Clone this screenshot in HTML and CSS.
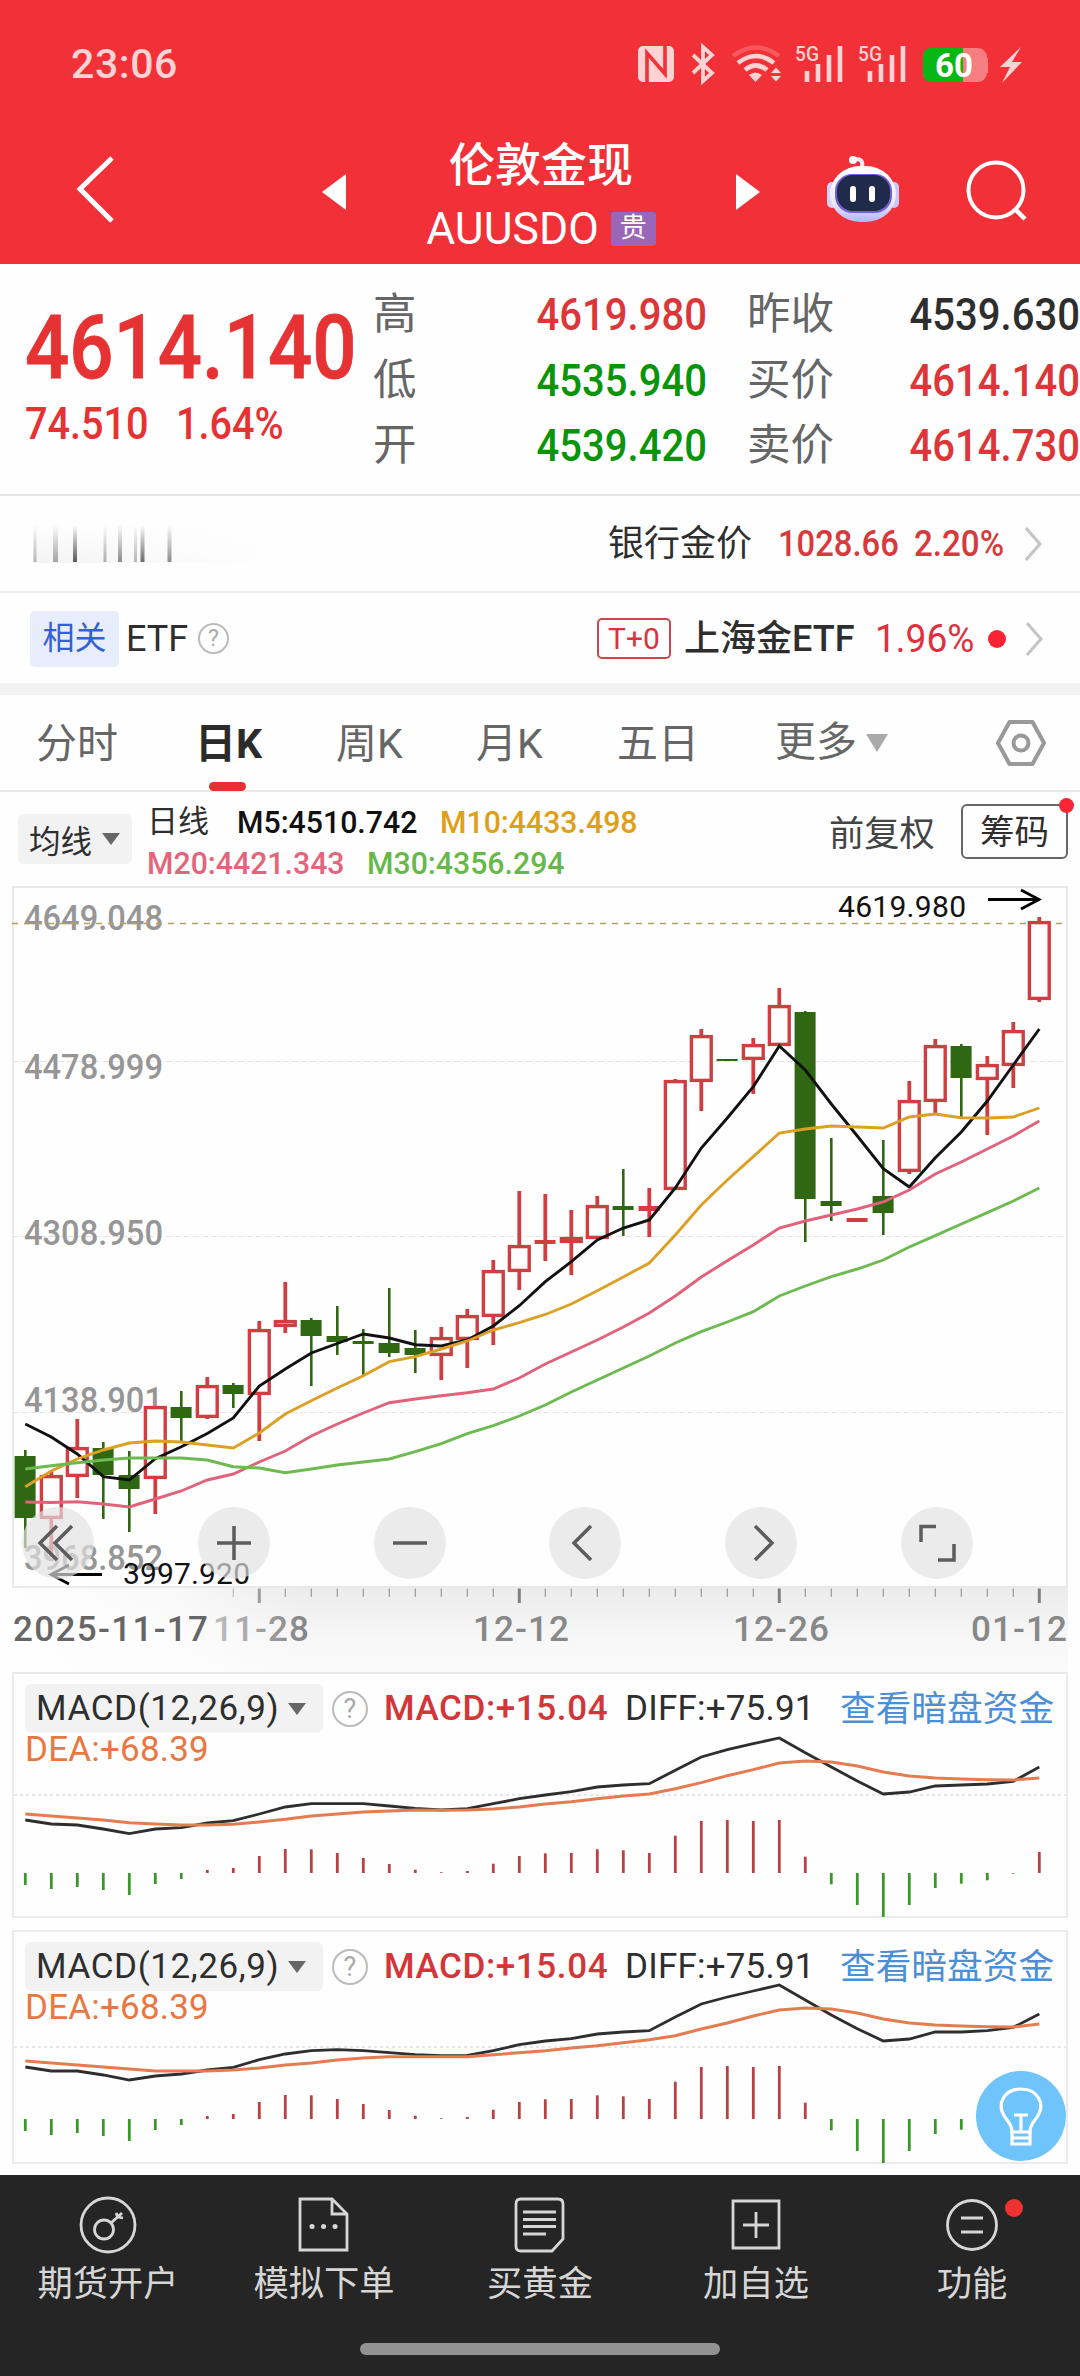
FILE: index.html
```html
<!DOCTYPE html>
<html lang="zh-CN">
<head>
<meta charset="utf-8">
<title>伦敦金现 AUUSDO</title>
<link rel="stylesheet" href="styles.css">
</head>
<body>
<div class="app">
  <header class="header">
    <div class="status">
      <span class="clock">23:06</span>
      <svg class="status-icons" width="396" height="46" viewBox="634 42 396 46">
        <g fill="#ffd3d4">
          <rect x="638" y="46" width="36" height="36" rx="5"/>
          <path d="M647 82V53L665 74V46" fill="none" stroke="#f23037" stroke-width="3.600"/>
          <path d="M693 55L712 73L703 81V47L712 55L693 73" fill="none" stroke="#ffd3d4" stroke-width="3.800"/>
          <path d="M733 56Q756 39 779 56" fill="none" stroke="#f5585d" stroke-width="4.500"/>
          <path d="M738 63Q756 49 774 63M745 70Q756 61 767 70" fill="none" stroke="#ffd3d4" stroke-width="4.600"/>
          <path d="M749 75Q755.500 70 762 75L755.500 82Z"/>
          <path d="M771 73l5-5.500l5 5.500zM771 76h10l-5 5.500z"/>
          <path d="M807 71v11M818 64v18M829 55v27M840 46v36M870 71v11M881 64v18M892 55v27M903 46v36" fill="none" stroke="#ffd3d4" stroke-width="4.600"/>
          <text x="795" y="61" class="net" textLength="24" lengthAdjust="spacingAndGlyphs">5G</text>
          <text x="858" y="61" class="net" textLength="24" lengthAdjust="spacingAndGlyphs">5G</text>
          <path d="M983 58h5v15h-5z" fill="#f57f80"/>
          <rect x="923" y="48" width="64" height="34" rx="9" fill="#f57f80"/>
          <path d="M932 48H963V82H932Q923 82 923 73V57Q923 48 932 48Z" fill="#08b614"/>
          <text x="935" y="76.500" class="battery" textLength="38" lengthAdjust="spacingAndGlyphs">60</text>
          <path d="M1021 47L1000 67H1010L1002 83L1022 62H1012Z"/>
        </g>
      </svg>
    </div>
    <nav class="titlebar">
      <svg class="back" width="48" height="76" viewBox="0 0 48 76"><path d="M41 7L9 38L41 70" fill="none" stroke="#fff" stroke-width="5"/></svg>
      <svg class="prev" width="24" height="36" viewBox="0 0 24 36"><path d="M24 0V36L0 18Z" fill="#fff"/></svg>
      <div class="title">
        <h1>伦敦金现</h1>
        <div class="code">AUUSDO<span>贵</span></div>
      </div>
      <svg class="next" width="24" height="36" viewBox="0 0 24 36"><path d="M0 0V36L24 18Z" fill="#fff"/></svg>
      <svg class="robot" width="74" height="70" viewBox="0 0 74 70">
        <defs><linearGradient id="shell" x2="0" y2="1"><stop stop-color="#fff"/><stop offset=".65" stop-color="#efeaff"/><stop offset="1" stop-color="#b2b5f1"/></linearGradient></defs>
        <path d="M36 13Q38 4 28 5" fill="none" stroke="#eee8fa" stroke-width="4"/><circle cx="27" cy="6" r="4" fill="#fff"/>
        <rect x="1" y="28" width="10" height="26" rx="5" fill="#d5d3f8"/><rect x="63" y="28" width="10" height="26" rx="5" fill="#c9c8f5"/>
        <rect x="4" y="12" width="66" height="56" rx="30" fill="url(#shell)"/>
        <rect x="9" y="20" width="57" height="39" rx="17" fill="#7560d0"/><rect x="11" y="21" width="53" height="36" rx="16" fill="#202a4b"/>
        <path d="M27 35v10M46 35v10" stroke="#fff" stroke-width="6" stroke-linecap="round"/>
      </svg>
      <svg class="search" width="64" height="64" viewBox="0 0 64 64"><circle cx="31" cy="31" r="27.500" fill="none" stroke="#fff" stroke-width="4"/><path d="M49 49L60 60" stroke="#fff" stroke-width="4.500"/></svg>
    </nav>
  </header>

  <section class="quote">
    <div class="last">
      <div class="price"><span class="narrow">4614.140</span></div>
      <div class="change"><span class="narrow">74.510</span><span class="narrow">1.64%</span></div>
    </div>
    <dl class="stats">
      <dt>高</dt><dd class="up">4619.980</dd><dt>昨收</dt><dd>4539.630</dd>
      <dt>低</dt><dd class="down">4535.940</dd><dt>买价</dt><dd class="up">4614.140</dd>
      <dt>开</dt><dd class="down">4539.420</dd><dt>卖价</dt><dd class="up">4614.730</dd>
    </dl>
  </section>

  <section class="row bank">
    <svg class="fading" width="242" height="38" viewBox="0 0 242 38">
      <defs>
        <linearGradient id="veil" x2="0" y2="1"><stop stop-color="#fefefe"/><stop offset="1" stop-color="#fefefe" stop-opacity="0"/></linearGradient>
        <linearGradient id="mist"><stop stop-color="#f3f3f3"/><stop offset="1" stop-color="#fefefe"/></linearGradient>
      </defs>
      <rect width="230" height="38" fill="url(#mist)"/>
      <path d="M2 0V37M102.500 0V37" stroke="#b4b4b4" stroke-width="3"/>
      <path d="M22.500 0V37" stroke="#a2a2a2" stroke-width="5"/>
      <path d="M42 0V37" stroke="#555" stroke-width="4"/>
      <path d="M72 0V37" stroke="#aaa" stroke-width="3"/>
      <path d="M87 0V37M136.500 0V37" stroke="#8a8a8a" stroke-width="4"/>
      <path d="M109.500 0V37" stroke="#666" stroke-width="4"/>
      <rect width="242" height="38" fill="url(#veil)"/>
    </svg>
    <span class="bank-name">银行金价</span>
    <span class="bank-price">1028.66</span>
    <span class="bank-pct">2.20%</span>
    <svg class="chev" width="18" height="34" viewBox="0 0 18 34"><path d="M1 1L15 17L1 33" fill="none" stroke="#c4c4c4" stroke-width="3"/></svg>
  </section>
  <section class="row etf">
    <span class="tag">相关</span><span class="etf-label">ETF</span>
    <span class="help small">?</span>
    <span class="t0">T+0</span>
    <b class="etf-name">上海金ETF</b>
    <span class="etf-pct">1.96%</span><i class="live"></i>
    <svg class="chev" width="18" height="34" viewBox="0 0 18 34"><path d="M1 1L15 17L1 33" fill="none" stroke="#c4c4c4" stroke-width="3"/></svg>
  </section>

  <nav class="tabs">
    <span>分时</span><span class="active">日K</span><span>周K</span><span>月K</span><span>五日</span>
    <span class="more">更多<i></i></span>
    <svg width="52" height="50" viewBox="0 0 52 50"><path d="M14.500 4H37.500L49 25L37.500 46H14.500L3 25Z" fill="none" stroke="#999" stroke-width="4" stroke-linejoin="round"/><circle cx="26" cy="25" r="7.500" fill="none" stroke="#999" stroke-width="4"/></svg>
  </nav>

  <section class="averages">
    <span class="picker">均线<i></i></span>
    <div class="ma">
      <div><span class="cycle">日线</span><span class="m5">M5:4510.742</span><span class="m10">M10:4433.498</span></div>
      <div><span class="m20">M20:4421.343</span><span class="m30">M30:4356.294</span></div>
    </div>
    <span class="adjust">前复权</span>
    <span class="chips">筹码</span>
  </section>

  <section class="chart">
    <svg id="kline" width="1080" height="792" viewBox="0 880 1080 792"></svg>
    <div class="tools">
      <button><svg viewBox="0 0 72 72"><path d="M35 19L18 36L35 53M50 19L33 36L50 53"/></svg></button>
      <button><svg viewBox="0 0 72 72"><path d="M36 19V53M19 36H53"/></svg></button>
      <button><svg viewBox="0 0 72 72"><path d="M19 36H53"/></svg></button>
      <button><svg viewBox="0 0 72 72"><path d="M42 19L25 36L42 53"/></svg></button>
      <button><svg viewBox="0 0 72 72"><path d="M30 19L47 36L30 53"/></svg></button>
      <button><svg viewBox="0 0 72 72"><path d="M20 35V19.500H35M53 37V53H37"/></svg></button>
    </div>
  </section>

  <section class="macd first">
    <svg id="macd1" width="1056" height="246" viewBox="12 1672 1056 246"></svg>
    <div class="legend"><span class="indicator">MACD(12,26,9)<i></i></span><span class="help">?</span><span class="v-macd">MACD:+15.04</span><span class="v-diff">DIFF:+75.91</span><a>查看暗盘资金</a></div>
    <div class="dea">DEA:+68.39</div>
  </section>
  <section class="macd second">
    <svg id="macd2" width="1056" height="234" viewBox="12 1930 1056 234"></svg>
    <div class="legend"><span class="indicator">MACD(12,26,9)<i></i></span><span class="help">?</span><span class="v-macd">MACD:+15.04</span><span class="v-diff">DIFF:+75.91</span><a>查看暗盘资金</a></div>
    <div class="dea">DEA:+68.39</div>
    <svg class="bulb" width="90" height="90" viewBox="0 0 90 90"><circle cx="45" cy="45" r="45" fill="#70c4fc"/><g fill="none" stroke="#fff" stroke-width="3.200"><path d="M36 61Q36 55 31 49C18 33 29 18 45 18S72 33 59 49Q54 55 54 61Z"/><path d="M38 44H52M45 44V60M36 67H54M36 61V73H54V61"/></g></svg>
  </section>

  <footer class="dock">
    <div class="items">
      <div><svg viewBox="0 0 60 60"><circle cx="30" cy="30" r="27"/><circle cx="26" cy="34.500" r="9.500"/><path d="M33 28L44 18M38 18l2 4l5 1"/></svg>期货开户</div>
      <div><svg viewBox="0 0 60 60"><path d="M6 4H38L53 19V55H6ZM38 4V19H53"/><path d="M18 31.500h.1M29.500 31.500h.1M41 31.500h.1" stroke-width="5" stroke-linecap="round"/></svg>模拟下单</div>
      <div><svg viewBox="0 0 60 60"><path d="M11 4H48Q53 4 53 9V44L42 56H11Q6 56 6 51V9Q6 4 11 4Z"/><path d="M13 17H46M13 24.500H46M13 31.500H46M13 39H36"/></svg>买黄金</div>
      <div><svg viewBox="0 0 60 60"><path d="M7 6H53V53H7ZM30 17V43M17 30H43"/></svg>加自选</div>
      <div class="dot"><svg viewBox="0 0 60 60"><circle cx="30" cy="30" r="24.500"/><path d="M19 23H41M19 37H41"/></svg>功能</div>
    </div>
    <div class="home"></div>
  </footer>
</div>
<script src="chart.js"></script>
</body>
</html>
```
FILE: styles.css
```css
* { box-sizing: border-box; }
body { margin: 0; background: #fff; }
.app {
  width: 1080px; height: 2376px; overflow: hidden;
  display: flex; flex-direction: column;
  font-family: Roboto, "Noto Sans CJK SC", sans-serif;
  color: #2e2e2e; background: #fefefe;
}
svg { display: block; flex: none; }
i { font-style: normal; }
span, b, a { white-space: nowrap; }

/* header */
.header { height: 264px; background: #f23037; color: #fff; flex: none; }
.status { height: 128px; padding: 42px 50px 0 71px; display: flex; justify-content: space-between; }
.clock { font-size: 41px; font-weight: 500; line-height: 44px; letter-spacing: .6px; color: #ffd3d4; }
.net { font-size: 21px; font-weight: 500; }
.battery { font-size: 33px; font-weight: 700; fill: #fff; }
.titlebar { height: 136px; display: flex; align-items: flex-start; padding-left: 71px; }
.back { margin-top: 23px; }
.prev { margin: 46px 0 0 203px; }
.title { width: 390px; text-align: center; padding-top: 7px; }
.title h1 { margin: 0; font-size: 46px; font-weight: 500; line-height: 60px; }
.code { display: flex; justify-content: center; align-items: center; gap: 12px; font-size: 44.500px; line-height: 60px; height: 64px; padding-top: 3px; }
.code span { width: 45px; height: 34px; border-radius: 3px; background: #9966b8; font-size: 27px; line-height: 33px; }
.next { margin-top: 46px; }
.robot { margin: 26px 0 0 66px; }
.search { margin: 31px 0 0 65px; }

/* quote */
.quote { height: 232px; flex: none; display: flex; padding: 17px 0 0 25px; border-bottom: 2px solid #e4e4e4; }
.narrow { display: inline-block; transform: scaleX(.89); transform-origin: left; }
.last { width: 348px; color: #e63233; font-weight: 500; }
.price { font-size: 89px; line-height: 100px; padding-top: 17px; height: 118px; -webkit-text-stroke: .8px #e63233; }
.price .narrow { transform: scaleX(.875); }
.change { display: flex; font-size: 44px; line-height: 50px; }
.change .narrow { width: 151px; transform: scaleX(.9); }
.stats { margin: 0; display: grid; grid-template-columns: 90px 244px 40px 90px 243px; grid-auto-rows: 65.500px; line-height: 67px; }
.stats dt { font-size: 43.500px; color: #666; }
.stats dt:nth-of-type(even) { grid-column: 4; }
.stats dd { margin: 0; text-align: right; font-size: 45px; font-weight: 500; transform: scaleX(.89); transform-origin: right; }
.up { color: #dc3638; }
.down { color: #099409; }

/* related rows */
.row { flex: none; display: flex; align-items: center; line-height: 50px; font-size: 36px; }
.bank { height: 97px; border-bottom: 2px solid #eee; padding: 1px 0 0 33px; }
.fading { margin-right: 333px; }
.bank-name { width: 170px; }
.bank-price, .bank-pct, .etf-pct { font-weight: 500; color: #d63a3c; transform: scaleX(.91); transform-origin: left; }
.bank-price { width: 136px; }
.bank-pct { width: 111px; transform: scaleX(.92); }
.etf { height: 90px; padding: 1px 0 0 30px; }
.tag { width: 89px; height: 56px; line-height: 55px; text-align: center; border-radius: 5px; background: #e7edfd; color: #3460d5; font-size: 32px; }
.etf-label { margin-left: 7px; width: 72px; }
.help { border: 2.500px solid #bbb; border-radius: 50%; color: #aaa; text-align: center; width: 36px; height: 36px; font-size: 27px; line-height: 32px; flex: none; }
.help.small { width: 31px; height: 31px; font-size: 23px; line-height: 27px; border-width: 2px; }
.t0 { margin-left: 368px; width: 74px; height: 41px; border: 2px solid #c8474d; border-radius: 5px; text-align: center; font-size: 30px; line-height: 38px; color: #d9343e; }
.etf-name { margin-left: 13px; font-weight: 500; width: 191px; }
.etf-pct { font-size: 39px; width: 113px; color: #e0303f; font-weight: 400; transform: scaleX(.95); }
.live { width: 18px; height: 18px; border-radius: 50%; background: #fa2234; margin-right: 20px; }

/* tabs */
.tabs { flex: none; height: 109px; border-top: 12px solid #f3f3f3; border-bottom: 2px solid #e8e8e8; display: flex; font-size: 41px; line-height: 99px; color: #666; padding-left: 36px; }
.tabs > span:nth-child(1) { width: 159px; }
.tabs > span:nth-child(2) { width: 141px; }
.tabs > span:nth-child(3) { width: 140px; }
.tabs > span:nth-child(4) { width: 141px; }
.tabs > span:nth-child(5) { width: 158px; }
.tabs .active { color: #2b2b2b; font-weight: 700; position: relative; }
.tabs .active::after { content: ""; position: absolute; left: 14px; bottom: -1px; width: 37px; height: 9px; border-radius: 5px; background: #e63032; }
.more { display: flex; align-items: center; width: 220px; gap: 9px; }
.more i, .picker i, .indicator i { border: 11px solid transparent; border-top: 18px solid #aaa; border-bottom: 0; }
.tabs svg { margin-top: 23px; }

/* moving averages */
.averages { flex: none; height: 88px; display: flex; padding-left: 18px; }
.picker { margin-top: 22px; width: 114px; height: 50px; border-radius: 6px; background: #f2f2f2; display: flex; align-items: center; padding-left: 11px; gap: 10px; font-size: 31.500px; }
.picker i, .indicator i { border-width: 12px 9px 0; border-top-color: #666; }
.ma { margin: 9px 0 0 15px; width: 682px; font-size: 32px; font-weight: 500; line-height: 42px; }
.ma div { display: flex; height: 41px; }
.ma span { transform: scaleX(.945); transform-origin: left; }
.ma .cycle { width: 90px; transform: none; font-weight: 400; font-size: 31px; }
.m5 { width: 203px; color: #111; }
.m10 { color: #dfa019; }
.m20 { width: 220px; color: #e4647c; }
.m30 { color: #66b949; }
.adjust { margin-top: 16px; width: 132px; font-size: 35.300px; line-height: 53px; color: #444; }
.chips { margin-top: 12px; width: 107px; height: 55px; border: 2px solid #666; border-radius: 6px; font-size: 34.500px; line-height: 52px; text-align: center; position: relative; }
.chips::after { content: ""; position: absolute; width: 15px; height: 15px; border-radius: 50%; background: #fa2535; right: -8px; top: -8px; }

/* candlestick chart */
.chart { flex: none; height: 792px; position: relative; }
.chart text { font-size: 35px; }
.chart .axis { fill: #969696; font-weight: 500; }
.chart .mark { fill: #111; font-size: 30px; }
.chart .date { fill: #888; font-weight: 500; }
.chart .date.start { fill: #666; }
.tools { position: absolute; left: 22px; top: 627px; display: flex; gap: 103.800px; }
.tools button { width: 72px; height: 72px; padding: 0; border: 0; border-radius: 50%; background: rgba(226, 226, 226, .68); }
.tools path { fill: none; stroke: #5c5c5c; stroke-width: 3.500; }

/* MACD */
.macd { flex: none; width: 1056px; margin-left: 12px; position: relative; border: 2px solid #eaeaea; }
.macd > svg:first-child { position: absolute; left: -2px; top: -2px; z-index: 1; }
.first { height: 246px; margin-bottom: 12px; }
.second { height: 234px; margin-bottom: 11px; }
.legend { display: flex; align-items: center; padding-left: 11px; margin-top: 10px; height: 49px; font-size: 35px; line-height: 48px; }
.indicator { width: 298px; height: 49px; border-radius: 6px; background: #f2f2f2; display: flex; align-items: center; padding-left: 11px; gap: 9px; letter-spacing: .6px; margin-right: 9px; }
.v-macd { width: 241px; margin-left: 16px; color: #d33639; letter-spacing: .6px; font-weight: 500; }
.v-diff { width: 215px; letter-spacing: .2px; }
.legend a { color: #4d8fd5; font-size: 35.700px; line-height: 46px; }
.dea { padding-left: 11px; font-size: 35px; line-height: 34px; color: #e97741; letter-spacing: .2px; }
.bulb { position: absolute; left: 962px; top: 139px; z-index: 2; }

/* dock */
.dock { flex: none; height: 201px; background: #252525; color: #d6d6d6; }
.items { display: flex; height: 168px; }
.items > div { width: 216px; padding-top: 20px; display: flex; flex-direction: column; align-items: center; font-size: 35.300px; line-height: 58px; position: relative; }
.items svg { width: 60px; height: 60px; fill: none; stroke: #d6d6d6; stroke-width: 2.800; }
.dot::after { content: ""; position: absolute; left: 141px; top: 24px; width: 18px; height: 18px; border-radius: 50%; background: #ee322f; }
.home { width: 360px; height: 12px; margin: 0 auto; border-radius: 6px; background: #929292; }
```
FILE: chart.js
```js
// Series are given in chart units, one entry per trading day.
const STEP = 26, START = 25.3;
const x = i => START + STEP * i;
const NS = 'http://www.w3.org/2000/svg';
function add(parent, tag, attrs, text) {
  const node = document.createElementNS(NS, tag);
  for (const key in attrs) node.setAttribute(key, attrs[key]);
  if (text) node.textContent = text;
  parent.appendChild(node);
  return node;
}
function line(svg, ys, color, width) {
  add(svg, 'polyline', { points: ys.map((y, i) => x(i) + ',' + y).join(' '), fill: 'none', stroke: color, 'stroke-width': width });
}

// direction, high, body top, body bottom, low
const candles = [
  ['d',1450,1456,1518,1548],['u',1471,1475,1519,1557],['u',1419,1447,1477,1498],['d',1442,1448,1475,1519],
  ['d',1451,1475,1489,1532],['u',1406,1406,1479,1514],['d',1391,1407,1418,1442],['u',1377,1385,1418,1419],
  ['d',1383,1385,1394,1408],['u',1321,1329,1395,1441],['u',1282,1320,1327,1333],['d',1318,1320,1336,1386],
  ['d',1306,1336,1342,1355],['d',1329,1341,1344,1375],['d',1288,1343,1353,1357],['d',1330,1348,1355,1373],
  ['u',1327,1337,1356,1380],['u',1309,1315,1340,1368],['u',1260,1270,1317,1345],['u',1191,1245,1272,1290],
  ['u',1194,1240,1244,1261],['u',1210,1237,1243,1275],['u',1196,1205,1239,1239],['d',1169,1206,1210,1236],
  ['u',1188,1206,1211,1237],['u',1079,1080,1190,1190],['u',1029,1035,1082,1111],['d',1059,1059,1061,1061],
  ['u',1038,1044,1060,1094],['u',988,1005,1046,1046],['d',1011,1012,1199,1242],['d',1138,1201,1206,1221],
  ['u',1218,1218,1222,1222],['d',1140,1196,1213,1235],['u',1081,1100,1172,1174],['u',1039,1045,1102,1114],
  ['d',1044,1046,1078,1117],['u',1056,1064,1080,1135],['u',1022,1030,1066,1088],['u',917,921,1000,1002]
];
const m5 = [1424,1437,1454,1476.7,1480,1458.7,1446.7,1433.5,1418,1386,1369,1353,1343.5,1334,1338,1344.7,1346,1340,1326,1305.7,1281.7,1261.7,1240,1228,1220,1188,1148,1118,1086.7,1046,1070,1104,1136,1168.7,1187,1157.7,1132,1101,1065,1029];
const m10 = [1486.7,1471,1459,1450,1443,1441,1442,1445,1448,1433,1414,1400.7,1388,1375.7,1361.7,1356.7,1349,1341,1330,1322.7,1314.5,1304,1290.7,1277,1263,1235,1205,1180,1156.7,1133,1129,1126,1127,1128,1117,1114,1117.7,1118,1117,1108];
const m20 = [1502,1502.5,1501.7,1504,1507,1499,1491,1480,1474,1462,1451,1436,1424,1413,1402.7,1399,1395.7,1392.7,1389,1378,1364,1352,1340,1327,1313,1296,1277,1260.7,1245,1228,1221,1215,1209,1202,1190,1174,1162,1149,1136,1121];
const m30 = [1469,1465.7,1462.7,1460,1458,1458,1458,1460,1466.7,1468,1472.7,1469,1465,1462,1459,1451.7,1443.7,1433.7,1425.7,1416,1405,1392,1380,1368,1356,1343,1331.7,1322,1311.7,1296,1286,1276.7,1269,1260,1247,1235.7,1224,1212.7,1201,1188];

function drawKline() {
  const svg = document.getElementById('kline');
  const defs = add(svg, 'defs', {});
  const down = add(defs, 'linearGradient', { id: 'shade', x1: 0, y1: 0, x2: 0, y2: 1 });
  add(down, 'stop', { offset: 0, 'stop-color': '#ececec' });
  add(down, 'stop', { offset: .6, 'stop-color': '#f7f7f7' });
  add(down, 'stop', { offset: 1, 'stop-color': '#fafafa' });
  const side = add(defs, 'linearGradient', { id: 'fade' });
  add(side, 'stop', { offset: 0, 'stop-color': '#fefefe' });
  add(side, 'stop', { offset: .55, 'stop-color': '#fefefe', 'stop-opacity': .7 });
  add(side, 'stop', { offset: 1, 'stop-color': '#fefefe', 'stop-opacity': 0 });

  add(svg, 'rect', { x: 12, y: 1588, width: 1056, height: 84, fill: 'url(#shade)' });
  add(svg, 'rect', { x: 13, y: 887, width: 1054, height: 700, fill: '#fefefe', stroke: '#e9e9e9', 'stroke-width': 2 });
  for (const y of [1061.5, 1236.5, 1412.5]) {
    add(svg, 'path', { d: `M13 ${y}H1066`, stroke: '#e4e4e4', 'stroke-width': 1.2, 'stroke-dasharray': '6 3' });
  }
  [['4649.048', 929.5], ['4478.999', 1079], ['4308.950', 1245], ['4138.901', 1412], ['3968.852', 1570]].forEach(([t, y]) =>
    add(svg, 'text', { class: 'axis', x: 24, y, textLength: 139, lengthAdjust: 'spacingAndGlyphs' }, t));
  add(svg, 'path', { d: 'M12 923.500H1066', stroke: '#b8a05c', 'stroke-width': 1.6, 'stroke-dasharray': '6 6' });

  candles.forEach(([dir, high, top, bottom, low], i) => {
    const red = '#d03e42', green = '#2f6713';
    if (dir === 'd') {
      add(svg, 'path', { d: `M${x(i)} ${high}V${low}`, stroke: green, 'stroke-width': 2.6 });
      add(svg, 'rect', { x: x(i) - 10.7, y: top, width: 21, height: bottom - top, fill: green });
    } else {
      add(svg, 'path', { d: `M${x(i)} ${high}V${top}M${x(i)} ${bottom}V${low}`, stroke: red, 'stroke-width': 3.8 });
      if (bottom - top < 6) add(svg, 'rect', { x: x(i) - 10.7, y: top, width: 21, height: bottom - top, fill: red });
      else add(svg, 'rect', { x: x(i) - 9.9, y: top + 1.6, width: 19.8, height: bottom - top - 3.2, fill: '#fefefe', stroke: red, 'stroke-width': 3.4 });
    }
  });
  line(svg, m5, '#111', 2.9);
  line(svg, m10, '#dba024', 2.9);
  line(svg, m20, '#e0627b', 2.9);
  line(svg, m30, '#6cba50', 2.9);

  add(svg, 'path', { d: 'M988 899.500H1038M1021 890L1039 899.500L1021 909M102 1574.500H52M69 1565L51 1574.500L69 1584', fill: 'none', stroke: '#000', 'stroke-width': 2.8 });
  add(svg, 'text', { class: 'mark', x: 838, y: 917, textLength: 128 }, '4619.980');
  add(svg, 'text', { class: 'mark', x: 123, y: 1584, textLength: 127 }, '3997.920');

  for (let i = 8; i < 40; i++) {
    const major = i % 10 === 9;
    add(svg, 'path', { d: `M${x(i)} 1588.500V${major ? 1603 : 1597}`, stroke: major ? '#808080' : '#999', 'stroke-width': major ? 3 : 1.2 });
  }
  [['11-28', 213], ['12-12', 473], ['12-26', 733], ['01-12', 971]].forEach(([t, left]) =>
    add(svg, 'text', { class: 'date', x: left, y: 1641, textLength: 96 }, t));
  add(svg, 'rect', { x: 10, y: 1588, width: 290, height: 84, fill: 'url(#fade)' });
  add(svg, 'text', { class: 'date start', x: 13, y: 1641, textLength: 195 }, '2025-11-17');
}

const bars = [-12,-16,-14,-17,-22,-11,-6,3,5,17,24,23.7,20,15,9,3.3,.7,2,9.3,17,19.7,20,23.7,22.7,20,37.3,52,53,52,53,16.3,-11.3,-32,-44,-32,-15,-10.7,-7.3,-.7,21];
const diff1 = [510,522,525,537,551,537,533,519,512,492,471,461,461,461,468,475,480,476,461,446,435,425,411,405,401,361,321,299,281,264,308,351,393,432,426,408,405,402,394,351];
const dea1 = [492,498,504,510,518,522,525,525,523,516,508,498,492,486,483,480,481,480,477,471,462,455,446,438,432,416,398,377,359,339,333,336,348,366,378,384,387,389,390,384];
const diff2 = [441,453,453,465,480,468,462,450,442,419,402,392,389,392,398,404,407,406,392,374,363,356,342,336,332,291,252,231,213,195,240,285,326,363,357,336,336,332,322,282];
const dea2 = [423,429,435,441,447,453,453,453,450,444,435,429,420,414,410,410,410,410,404,398,392,384,377,368,359,347,327,309,288,270,264,267,279,297,309,315,318,320,321,312];

function drawMacd(id, base, zero, middle, diff, dea) {
  const svg = document.getElementById(id);
  add(svg, 'path', { d: `M14 ${middle}H1066`, stroke: '#e0e0e0', 'stroke-width': 1.5, 'stroke-dasharray': '3 3' });
  bars.forEach((v, i) => add(svg, 'path', { d: `M${x(i)} ${zero}V${zero - v}`, stroke: v > 0 ? '#b94043' : '#3b972b', 'stroke-width': 2.8 }));
  line(svg, diff.map(v => base + v / 3), '#2e2e2e', 2.8);
  line(svg, dea.map(v => base + v / 3), '#e47c50', 3);
}

drawKline();
drawMacd('macd1', 1650, 1873, 1795, diff1, dea1);
drawMacd('macd2', 1920, 2119, 2047, diff2, dea2);
```
